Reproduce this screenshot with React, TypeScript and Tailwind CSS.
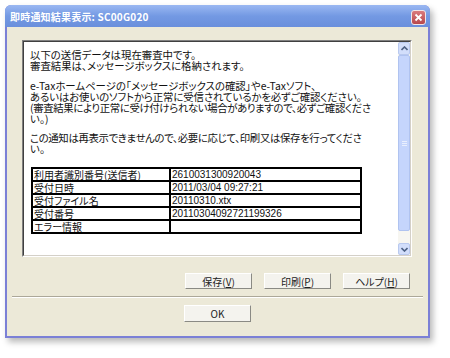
import React from "react";

const font = { fontFamily: '"Noto Sans CJK JP", "Liberation Sans", sans-serif' };

const rows: [string, string][] = [
  ["利用者識別番号(送信者)", "2610031300920043"],
  ["受付日時", "2011/03/04 09:27:21"],
  ["受付ファイル名", "20110310.xtx"],
  ["受付番号", "20110304092721199326"],
  ["エラー情報", ""],
];

const Chevron = ({ up }: { up?: boolean }) => (
  <svg width="7" height="5" viewBox="0 0 7 5">
    <path
      d={up ? "M0.5 4 L3.5 1 L6.5 4" : "M0.5 1 L3.5 4 L6.5 1"}
      fill="none"
      stroke="#4d6185"
      strokeWidth="1.6"
    />
  </svg>
);

const Button = ({ children, className = "" }: { children: React.ReactNode; className?: string }) => (
  <div
    className={`w-[67px] flex items-center justify-center border border-t-white border-l-white border-r-[#8a8a84] border-b-[#8a8a84] bg-[#f4f3ee] text-[10px] text-[#222] ${className}`}
  >
    {children}
  </div>
);

export default function App() {
  return (
    <div className="w-[450px] h-[358px] bg-white pl-[5px] pt-[5px] [font-feature-settings:'palt']" style={font}>
      <div className="w-[425px] h-[333px] flex flex-col rounded-t-[6px] bg-[#7b80d6] shadow-[3px_4px_6px_rgba(0,0,0,0.28)]">
        {/* title bar */}
        <div className="h-[22px] flex items-center justify-between pl-[5px] pr-[4px] rounded-t-[6px] bg-gradient-to-b from-[#9bb8f2] via-[#7399e3] to-[#6a8fdc]">
          <span className="text-[10px] font-bold text-white tracking-[0.2px]">即時通知結果表示: SC00G020</span>
          <div className="w-[15px] h-[15px] mt-[3px] rounded-[3px] border border-[#f2e6e6] bg-gradient-to-b from-[#d97b7e] to-[#b8484c] flex items-center justify-center">
            <svg width="9" height="9" viewBox="0 0 9 9">
              <path d="M1.5 1.5 L7.5 7.5 M7.5 1.5 L1.5 7.5" stroke="white" strokeWidth="1.8" />
            </svg>
          </div>
        </div>

        {/* body */}
        <div className="flex-1 mx-[2px] mb-[2px] bg-[#ece9d8] flex flex-col">
          {/* panel */}
          <div className="ml-[15px] mt-[13px] w-[390px] h-[217px] flex border border-t-[#808080] border-l-[#808080] border-r-white border-b-white">
            <div className="flex-1 flex border border-t-[#404040] border-l-[#404040] border-r-[#d4d0c8] border-b-[#d4d0c8] bg-white">
              <div className="flex-1 pl-[6px] pt-[7px] text-[10.4px] leading-[11.3px] text-[#111]">
                <div>以下の送信データは現在審査中です。</div>
                <div>審査結果は、メッセージボックスに格納されます。</div>
                <div className="mt-[8px]">e-Taxホームページの「メッセージボックスの確認」やe-Taxソフト、</div>
                <div className="tracking-[-0.1px]">あるいはお使いのソフトから正常に受信されているかを必ずご確認ください。</div>
                <div className="whitespace-nowrap tracking-[-0.35px]">(審査結果により正常に受け付けられない場合がありますので、必ずご確認くださ</div>
                <div>い。)</div>
                <div className="mt-[7px] whitespace-nowrap tracking-[-0.35px]">この通知は再表示できませんので、必要に応じて、印刷又は保存を行ってくださ</div>
                <div>い。</div>
                <table className="mt-[13px] ml-[1px] w-[331px] border-collapse border-2 border-black text-[10px]">
                  <tbody>
                    {rows.map(([k, v]) => (
                      <tr key={k} className="h-[13px]">
                        <td className="w-[138px] border-2 border-black px-[1px] py-0 leading-[9px] whitespace-nowrap">{k}</td>
                        <td className="border-2 border-black px-[1px] py-0 leading-[9px] whitespace-nowrap" style={{ fontFamily: '"Liberation Sans", sans-serif' }}>{v}</td>
                      </tr>
                    ))}
                  </tbody>
                </table>
              </div>
              {/* scrollbar */}
              <div className="w-[12px] flex flex-col bg-[#f7f6f1]">
                <div className="h-[13px] flex items-center justify-center rounded-[2px] border border-[#b9c9ef] bg-[#d2defb]">
                  <Chevron up />
                </div>
                <div className="h-[176px] rounded-[2px] border border-[#b0c3f0] bg-[#c5d5fc] flex items-center justify-center">
                  <div className="w-[5px] flex flex-col gap-[1px]">
                    <div className="h-px bg-[#e9effd]" />
                    <div className="h-px bg-[#e9effd]" />
                    <div className="h-px bg-[#e9effd]" />
                  </div>
                </div>
                <div className="flex-1" />
                <div className="h-[12px] flex items-center justify-center rounded-[2px] border border-[#b9c9ef] bg-[#d2defb]">
                  <Chevron />
                </div>
              </div>
            </div>
          </div>

          {/* buttons */}
          <div className="mt-[16px] flex justify-end gap-[12px] pr-[18px]">
            <Button className="h-[16px]">保存(<u>V</u>)</Button>
            <Button className="h-[16px]">印刷(<u>P</u>)</Button>
            <Button className="h-[16px]">ヘルプ(<u>H</u>)</Button>
          </div>
          <div className="mt-[7px] mx-[5px] border-t border-t-[#aca899] border-b border-b-white" />
          <div className="mt-[7px] ml-[177px]">
            <Button className="h-[17px]">OK</Button>
          </div>
        </div>
      </div>
    </div>
  );
}
